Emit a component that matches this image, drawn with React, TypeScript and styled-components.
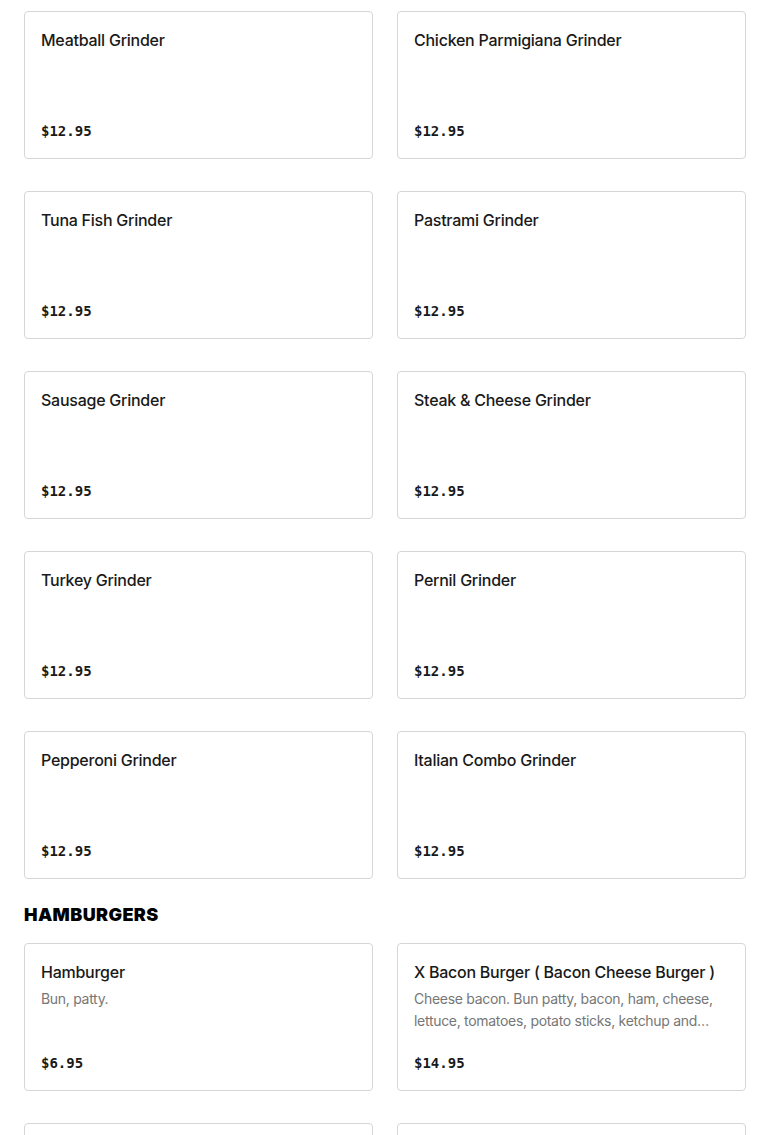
import styled, { createGlobalStyle } from 'styled-components'

const GlobalStyle = createGlobalStyle`
	body {
		margin: 0;
		background: #ffffff;
		font-family: Inter, "Noto Sans", sans-serif;
		color: #191919;
	}
`

type Item = { name: string; desc?: string; price: string }

const grinders: Item[] = [
	{ name: 'Meatball Grinder', price: '$12.95' },
	{ name: 'Chicken Parmigiana Grinder', price: '$12.95' },
	{ name: 'Tuna Fish Grinder', price: '$12.95' },
	{ name: 'Pastrami Grinder', price: '$12.95' },
	{ name: 'Sausage Grinder', price: '$12.95' },
	{ name: 'Steak & Cheese Grinder', price: '$12.95' },
	{ name: 'Turkey Grinder', price: '$12.95' },
	{ name: 'Pernil Grinder', price: '$12.95' },
	{ name: 'Pepperoni Grinder', price: '$12.95' },
	{ name: 'Italian Combo Grinder', price: '$12.95' },
]

const burgers: Item[] = [
	{ name: 'Hamburger', desc: 'Bun, patty.', price: '$6.95' },
	{
		name: 'X Bacon Burger ( Bacon Cheese Burger )',
		desc: 'Cheese bacon. Bun patty, bacon, ham, cheese, lettuce, tomatoes, potato sticks, ketchup and mayo.',
		price: '$14.95',
	},
	{ name: 'X Egg Burger', price: '$13.95' },
	{ name: 'X Salad Burger', price: '$12.95' },
]

const App = () => {
	return (
		<Page>
			<GlobalStyle />
			<Grid>
				{grinders.map((item) => (
					<Card key={item.name} item={item} />
				))}
			</Grid>
			<SectionTitle>HAMBURGERS</SectionTitle>
			<Grid>
				{burgers.map((item) => (
					<Card key={item.name} item={item} />
				))}
			</Grid>
		</Page>
	)
}

const Card = ({ item }: { item: Item }) => (
	<CardBox>
		<Name>{item.name}</Name>
		{item.desc && <Desc>{item.desc}</Desc>}
		<Price>{item.price}</Price>
	</CardBox>
)

const Page = styled.div`
	padding: 11px 24px 40px;
`

const Grid = styled.div`
	display: grid;
	grid-template-columns: 1fr 1fr;
	column-gap: 24px;
	row-gap: 32px;
`

const CardBox = styled.div`
	box-sizing: border-box;
	height: 148px;
	border: 1px solid #d6d6d6;
	border-radius: 4px;
	padding: 16px;
	display: flex;
	flex-direction: column;
`

const Name = styled.div`
	font-size: 16px;
	line-height: 24px;
	font-weight: 500;
	letter-spacing: -0.25px;
	color: #191919;
	white-space: nowrap;
	overflow: hidden;
	text-overflow: ellipsis;
`

const Desc = styled.div`
	margin-top: 4px;
	font-size: 14px;
	line-height: 22px;
	letter-spacing: -0.3px;
	color: #767676;
	display: -webkit-box;
	-webkit-line-clamp: 2;
	-webkit-box-orient: vertical;
	overflow: hidden;
`

const Price = styled.div`
	margin-top: auto;
	font-family: 'DejaVu Sans Mono', 'Liberation Mono', monospace;
	font-size: 14px;
	line-height: 22px;
	font-weight: 700;
	color: #191919;
`

const SectionTitle = styled.h2`
	margin: 24px 0 16px;
	font-size: 18px;
	line-height: 24px;
	font-weight: 900;
	letter-spacing: 0.4px;
	color: #000;
`

export default App
